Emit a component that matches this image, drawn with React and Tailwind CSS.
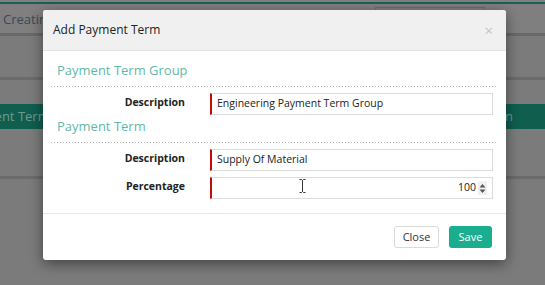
import React from "react";

function Dotted() {
  return (
    <div className="h-px mx-[8px] bg-[linear-gradient(to_right,#b5b5b5_1px,transparent_1px)] bg-[length:3px_1px]" />
  );
}

function Field({ label, value, number, cursor }) {
  return (
    <div className="flex h-[22px]">
      <div className="w-[142px] shrink-0 text-right text-[10.5px] font-bold text-[#222] leading-[18px]">
        {label}
      </div>
      <div className="ml-[25px] relative w-[283px] h-[22px] border border-[#dcdcdc] border-l-2 border-l-[#c40a0a] bg-white flex items-center px-[5px] text-[10.5px] text-[#222]">
        {number ? (
          <div className="flex-1 flex items-center justify-end">
            <span>{value}</span>
            <span className="ml-[2px] w-[9px] h-[14px] bg-[#f0f0f0] flex items-center justify-center">
              <svg width="7" height="11" viewBox="0 0 7 11">
                <path d="M0.5 4.5 L3.5 1 L6.5 4.5 Z" fill="#555" />
                <path d="M0.5 6.5 L3.5 10 L6.5 6.5 Z" fill="#555" />
              </svg>
            </span>
          </div>
        ) : (
          <span>{value}</span>
        )}
        {cursor && (
          <svg width="7" height="14" viewBox="0 0 7 14" className="absolute left-[87px] top-[1px]">
            <path d="M0.5 0.5 H2.5 L3.5 1.5 L4.5 0.5 H6.5 M3.5 1.5 V12.5 M0.5 13.5 H2.5 L3.5 12.5 L4.5 13.5 H6.5" stroke="#333" strokeWidth="1" fill="none" />
          </svg>
        )}
      </div>
    </div>
  );
}

export default function App() {
  return (
    <div className="relative w-[545px] h-[285px] overflow-hidden bg-[#7b7b7b] font-['Open_Sans',sans-serif]">
      {/* background page */}
      <div className="h-[2px] bg-[#808080]" />
      <div className="h-[2px] bg-[#1d5f54]" />
      <div className="h-[29px] flex items-start justify-between pl-[3px] bg-[#7f7f7f]">
        <span className="mt-[6px] text-[13px] text-[#3c4857]">Creating</span>
        <div className="mt-[3px] mr-[60px] w-[110px] h-[26px] border border-[#6c6c6c]" />
      </div>
      <div className="h-[3px] bg-[#696969]" />
      <div className="h-[41px]" />
      <div className="h-[3px] bg-[#6b6b6b]" />
      <div className="h-[24px]" />
      <div className="h-[25px] bg-[#0f5e4e] flex items-center justify-between text-[13px] text-[#6f9a90] overflow-hidden">
        <span className="-ml-[39px] whitespace-nowrap">Payment Term</span>
        <span className="mr-[32px]">n</span>
      </div>
      <div className="h-[47px]" />
      <div className="h-[3px] bg-[#6b6b6b]" />

      {/* modal */}
      <div className="absolute left-[43px] top-[10px] w-[463px] h-[250px] bg-white rounded-[3px] shadow-[0_4px_14px_rgba(0,0,0,0.45)] flex flex-col overflow-hidden">
        <div className="h-[41px] shrink-0 bg-[#f0f0f0] border-b border-[#e2e2e2] flex items-center justify-between pl-[10px] pr-[13px]">
          <span className="text-[12px] text-[#222]">Add Payment Term</span>
          <span className="text-[15px] text-[#c4c4c4] leading-none">×</span>
        </div>

        <div className="h-[35px] flex items-end pb-[6px] pl-[14px]">
          <span className="text-[13px] leading-[20px] text-[#62b8a6]">Payment Term Group</span>
        </div>
        <Dotted />
        <div className="mt-[6px]">
          <Field label="Description" value="Engineering Payment Term Group" />
        </div>
        <div className="h-[27px] flex items-end pb-[6px] pl-[14px]">
          <span className="text-[13px] leading-[20px] text-[#62b8a6]">Payment Term</span>
        </div>
        <Dotted />
        <div className="mt-[6px] flex flex-col gap-[6px]">
          <Field label="Description" value="Supply Of Material" />
          <Field label="Percentage" value="100" number cursor />
        </div>

        <div className="mt-[14px] border-t border-[#e5e5e5] flex justify-end gap-[10px] pt-[12px] pr-[14px]">
          <button className="w-[45px] h-[22px] border border-[#dadada] rounded-[3px] bg-white text-[11px] text-[#333]">
            Close
          </button>
          <button className="w-[43px] h-[22px] rounded-[3px] bg-[#1aae8e] text-[11px] text-white">
            Save
          </button>
        </div>
      </div>
    </div>
  );
}
